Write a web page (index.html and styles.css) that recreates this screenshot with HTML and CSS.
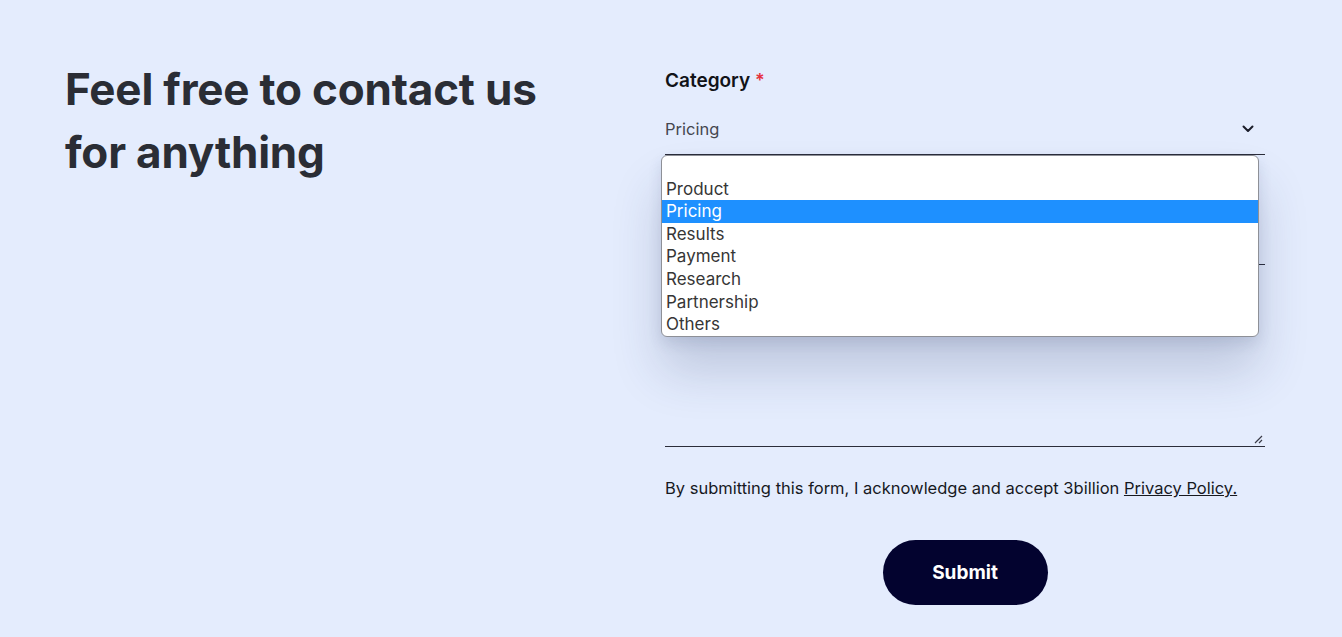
FILE: index.html
```html
<!DOCTYPE html>
<html lang="en">
<head>
<meta charset="utf-8">
<title>Contact</title>
<link rel="stylesheet" href="styles.css">
</head>
<body>
<main class="page">
  <section class="intro">
    <h1 class="title">Feel free to contact us<br>for anything</h1>
  </section>
  <form class="form">
    <div class="field field-select">
      <label class="label">Category <span class="req">*</span></label>
      <div class="select">
        <span class="select-value">Pricing</span>
        <svg class="chevron" width="12" height="8" viewBox="0 0 12 8"><path d="M1.5 1.5 L6 6 L10.5 1.5" fill="none" stroke="#1b1d2a" stroke-width="2" stroke-linecap="round" stroke-linejoin="round"/></svg>
      </div>
      <ul class="dropdown">
        <li class="opt opt-empty"></li>
        <li class="opt">Product</li>
        <li class="opt opt-active">Pricing</li>
        <li class="opt">Results</li>
        <li class="opt">Payment</li>
        <li class="opt">Research</li>
        <li class="opt">Partnership</li>
        <li class="opt">Others</li>
      </ul>
    </div>
    <div class="field field-hidden">
      <div class="input" aria-label="Email"></div>
    </div>
    <div class="field field-hidden">
      <div class="textarea" aria-label="Message">
        <svg class="grip" width="10" height="10" viewBox="0 0 10 10"><path d="M9 2 L2 9 M9 6 L6 9" stroke="#3a3c48" stroke-width="1.2" fill="none"/></svg>
      </div>
    </div>
    <p class="consent">By submitting this form, I acknowledge and accept 3billion <a href="#" class="link">Privacy Policy.</a></p>
    <div class="actions">
      <button type="button" class="submit">Submit</button>
    </div>
  </form>
</main>
</body>
</html>
```
FILE: styles.css
```css
* { box-sizing: border-box; }
html, body { margin: 0; padding: 0; }
body {
  background: #e4ecfd;
  font-family: Inter, "Noto Sans", sans-serif;
  color: #1a1c24;
  width: 1342px;
  height: 637px;
  overflow: hidden;
}
.page {
  display: flex;
  padding: 58px 0 0 65px;
}
.intro {
  width: 600px;
  flex: none;
}
.title {
  margin: 0;
  font-size: 44px;
  line-height: 63px;
  font-weight: 700;
  color: #2a2d35;
  letter-spacing: -0.2px;
}
.form {
  width: 600px;
  margin-top: 12px;
  display: flex;
  flex-direction: column;
}
.field { position: relative; }
.label {
  display: block;
  font-size: 19px;
  font-weight: 600;
  line-height: 22px;
  color: #111318;
}
.req { color: #e5323f; font-size: 18px; }
.select {
  height: 51px;
  margin-top: 12px;
  border-bottom: 1px solid #2b2d3a;
  display: flex;
  align-items: center;
  justify-content: space-between;
  padding-right: 11px;
}
.select-value {
  font-size: 16.5px;
  color: #45474f;
}
.dropdown {
  position: absolute;
  left: -4px;
  top: 85px;
  width: 598px;
  height: 182px;
  margin: 0;
  padding: 0;
  list-style: none;
  background: #fff;
  border: 1px solid #8e9097;
  border-radius: 6px;
  box-shadow: 0 34px 50px rgba(40, 55, 100, 0.2), 0 6px 14px rgba(40, 55, 100, 0.12);
  overflow: hidden;
  z-index: 5;
}
.opt {
  height: 22.6px;
  line-height: 22.6px;
  padding-left: 4px;
  font-size: 17px;
  color: #363636;
}
.opt-empty { height: 21.6px; }
.opt-active {
  background: #1e90ff;
  color: #fff;
}
.field-hidden { margin-top: 36px; }
.input {
  height: 74px;
  border-bottom: 1px solid #2b2d3a;
}
.textarea {
  position: relative;
  height: 146px;
  border-bottom: 1px solid #2b2d3a;
}
.grip {
  position: absolute;
  right: 2px;
  bottom: 2px;
}
.consent {
  margin: 30px 0 0;
  font-size: 16.5px;
  line-height: 22px;
  color: #17191f;
}
.link { color: #17191f; text-decoration: underline; }
.actions {
  display: flex;
  justify-content: center;
  margin-top: 41px;
}
.submit {
  width: 165px;
  height: 65px;
  border: none;
  border-radius: 33px;
  background: #03032f;
  color: #fff;
  font-family: Inter, sans-serif;
  font-size: 19px;
  font-weight: 700;
}
```
